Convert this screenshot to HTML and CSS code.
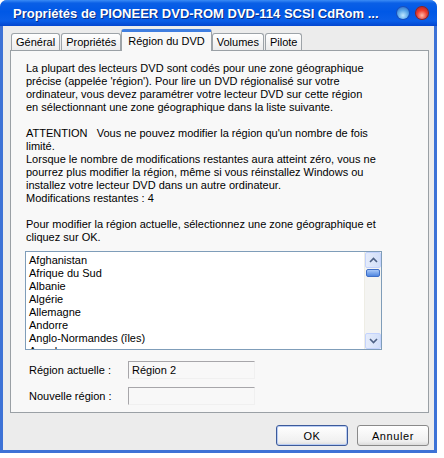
FILE: index.html
```html
<!DOCTYPE html>
<html lang="fr">
<head>
<meta charset="utf-8">
<title>Propriétés</title>
<link rel="stylesheet" href="styles.css">
</head>
<body>
<div class="window">
  <div class="titlebar">
    <span class="title">Propriétés de PIONEER DVD-ROM DVD-114 SCSI CdRom ...</span>
    <span class="tbtn help"></span>
    <span class="tbtn close"></span>
  </div>
  <div class="client">
    <div class="tabs">
      <div class="tab">Général</div>
      <div class="tab">Propriétés</div>
      <div class="tab active">Région du DVD</div>
      <div class="tab">Volumes</div>
      <div class="tab">Pilote</div>
    </div>
    <div class="panel">
      <p class="para">La plupart des lecteurs DVD sont codés pour une zone géographique<br>précise (appelée 'région'). Pour lire un DVD régionalisé sur votre<br>ordinateur, vous devez paramétrer votre lecteur DVD sur cette région<br>en sélectionnant une zone géographique dans la liste suivante.</p>
      <p class="para">ATTENTION&nbsp;&nbsp;&nbsp;Vous ne pouvez modifier la région qu'un nombre de fois<br>limité.<br>Lorsque le nombre de modifications restantes aura atteint zéro, vous ne<br>pourrez plus modifier la région, même si vous réinstallez Windows ou<br>installez votre lecteur DVD dans un autre ordinateur.<br>Modifications restantes : 4</p>
      <p class="para last">Pour modifier la région actuelle, sélectionnez une zone géographique et<br>cliquez sur OK.</p>
      <div class="listbox">
        <ul class="items">
          <li>Afghanistan</li>
          <li>Afrique du Sud</li>
          <li>Albanie</li>
          <li>Algérie</li>
          <li>Allemagne</li>
          <li>Andorre</li>
          <li>Anglo-Normandes (îles)</li>
          <li>Angola</li>
        </ul>
        <div class="scrollbar">
          <div class="sbtn"><svg width="9" height="6" viewBox="0 0 9 6"><path d="M1 5 L4.5 1.5 L8 5" fill="none" stroke="#4d6185" stroke-width="1.6"/></svg></div>
          <div class="thumb"></div>
          <div class="track"></div>
          <div class="sbtn"><svg width="9" height="6" viewBox="0 0 9 6"><path d="M1 1 L4.5 4.5 L8 1" fill="none" stroke="#4d6185" stroke-width="1.6"/></svg></div>
        </div>
      </div>
      <div class="field">
        <span class="label">Région actuelle :</span>
        <span class="box">Région 2</span>
      </div>
      <div class="field">
        <span class="label">Nouvelle région :</span>
        <span class="box"></span>
      </div>
    </div>
    <div class="buttons">
      <button class="btn default">OK</button>
      <button class="btn">Annuler</button>
    </div>
  </div>
</div>
</body>
</html>
```

FILE: styles.css
```css
html, body {
  margin: 0;
  padding: 0;
  background: #ffffff;
}
body {
  width: 444px;
  height: 458px;
  overflow: hidden;
  font-family: "Liberation Sans", Arial, sans-serif;
  font-size: 11px;
  color: #000;
}
.window {
  width: 437px;
  height: 453px;
  box-sizing: border-box;
  display: flex;
  flex-direction: column;
  background: #3d72d6;
  border-radius: 7px 7px 0 0;
  padding: 0 3px 3px 3px;
}
.titlebar {
  height: 26px;
  margin: 0 -3px;
  padding: 0 9px 0 13px;
  display: flex;
  align-items: center;
  border-radius: 7px 7px 0 0;
  background: linear-gradient(to bottom, #3b8cf5 0%, #0a5fe6 12%, #0058e6 45%, #0a5ee8 80%, #0346cf 100%);
}
.title {
  flex: 1;
  color: #fff;
  font-family: "Liberation Sans", Arial, sans-serif;
  font-weight: bold;
  font-size: 13px;
  white-space: nowrap;
  text-shadow: 1px 1px 0 #0a2a80;
}
.tbtn {
  width: 12px;
  height: 12px;
  border-radius: 50%;
  margin-left: 7px;
}
.help {
  background: radial-gradient(circle at 50% 70%, #bfe8ff 0%, #5aa6e8 50%, #2b5fb8 100%);
  box-shadow: 0 0 0 1px #1c4fb8;
}
.close {
  background: radial-gradient(circle at 50% 70%, #ffb9a8 0%, #ee3a2a 50%, #b81d10 100%);
  box-shadow: 0 0 0 1px #a02010;
}
.client {
  flex: 1;
  background: #ececec;
  padding: 3px 5px 0 7px;
  display: flex;
  flex-direction: column;
}
.tabs {
  display: flex;
  align-items: flex-end;
  height: 21px;
  padding-left: 1px;
  position: relative;
  z-index: 1;
}
.tab {
  height: 17px;
  box-sizing: border-box;
  padding: 2px 4px 0 4px;
  border: 1px solid #9da3a8;
  border-bottom: none;
  border-radius: 3px 3px 0 0;
  background: linear-gradient(to bottom, #ffffff, #ececec);
  margin-right: 1px;
  line-height: 13px;
}
.tab.active {
  height: 22px;
  margin-bottom: -1px;
  padding: 3px 6px 0 6px;
  background: #f8f8f8;
  border-top: 3px solid #3f7ee0;
  margin-left: -1px;
  margin-right: 0;
}
.panel {
  width: 419px;
  height: 363px;
  box-sizing: border-box;
  border: 1px solid #9aa0a5;
  background: #f8f8f8;
  padding: 11px 10px 0 15px;
}
.para {
  margin: 0 0 13px 0;
  line-height: 13px;
}
.para.last {
  margin-bottom: 7px;
}
.listbox {
  width: 357px;
  height: 99px;
  box-sizing: border-box;
  margin: 0 0 0 -1px;
  border: 1px solid #7f9db9;
  background: #fff;
  display: flex;
  overflow: hidden;
}
.items {
  flex: 1;
  list-style: none;
  margin: 0;
  padding: 2px 0 0 3px;
  line-height: 13px;
}
.scrollbar {
  width: 16px;
  display: flex;
  flex-direction: column;
  background: #f4f4f2;
  border-left: 1px solid #eeede5;
}
.sbtn {
  height: 16px;
  box-sizing: border-box;
  border: 1px solid #c3d3fd;
  border-radius: 2px;
  background: linear-gradient(to right, #e5ecfb, #d2dff9);
  display: flex;
  align-items: center;
  justify-content: center;
}
.thumb {
  height: 8px;
  box-sizing: border-box;
  margin: 1px 1px 0 1px;
  border: 1px solid #3e6ec7;
  border-radius: 2px;
  background: linear-gradient(to bottom, #a8c8f8, #4f86e0);
}
.track {
  flex: 1;
}
.field {
  display: flex;
  align-items: center;
  margin-top: 11px;
}
.field + .field {
  margin-top: 8px;
}
.label {
  width: 99px;
  padding-left: 3px;
}
.box {
  width: 127px;
  height: 18px;
  box-sizing: border-box;
  border-top: 1px solid #a7a6aa;
  border-left: 1px solid #a7a6aa;
  border-right: 1px solid #f0f0f0;
  border-bottom: 1px solid #f0f0f0;
  padding: 2px 0 0 3px;
  line-height: 13px;
}
.buttons {
  display: flex;
  justify-content: flex-end;
  gap: 9px;
  padding: 12px 0 0 0;
}
.btn {
  width: 72px;
  height: 21px;
  box-sizing: border-box;
  font-family: "Liberation Sans", Arial, sans-serif;
  font-size: 11px;
  letter-spacing: 0.6px;
  color: #000;
  border: 1px solid #8a8a8a;
  border-radius: 3px;
  background: linear-gradient(to bottom, #ffffff, #f0f0f0 80%, #dcdcdc);
  padding: 0;
}
.btn.default {
  border-color: #3c5a9a;
  box-shadow: inset 0 0 0 1px #b9cdf4;
}
```
